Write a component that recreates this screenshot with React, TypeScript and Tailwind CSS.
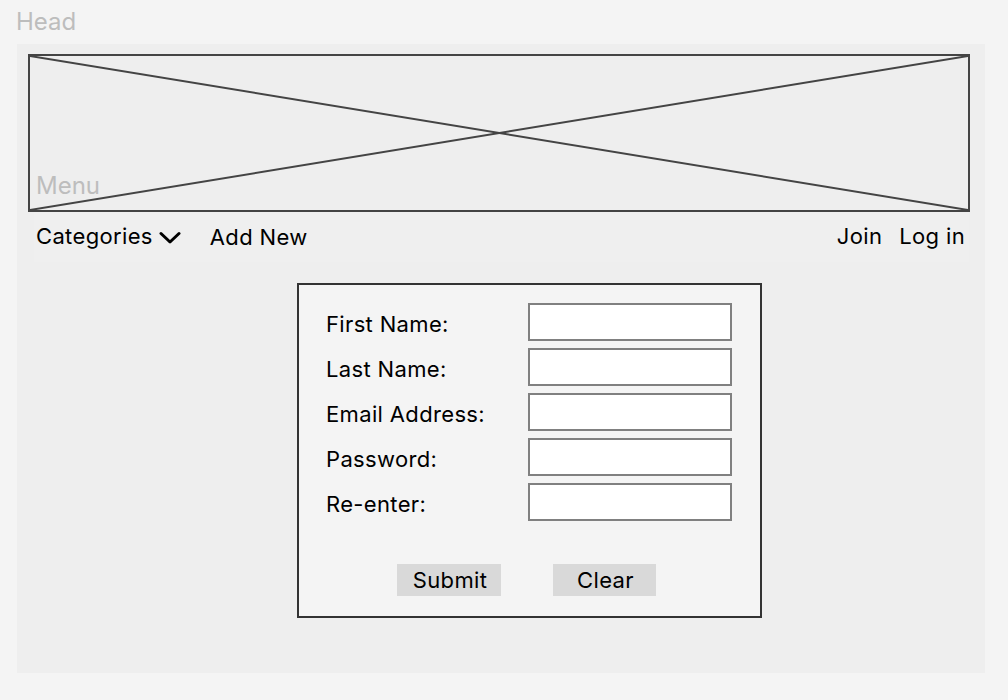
import { useState } from 'react';

const fields = ['First Name:', 'Last Name:', 'Email Address:', 'Password:', 'Re-enter:'];

const Chevron = () => (
  <svg width="22" height="14" viewBox="0 0 22 14" fill="none">
    <path d="M2 2.5 L11 11 L20 2.5" stroke="#000" strokeWidth="3" strokeLinecap="round" strokeLinejoin="round" />
  </svg>
);

const App = () => {
  const [values, setValues] = useState<string[]>(fields.map(() => ''));

  const update = (i: number, v: string) => {
    const next = [...values];
    next[i] = v;
    setValues(next);
  };

  return (
    <div className="w-full h-[700px] bg-[#f4f4f4] font-['Inter',sans-serif] text-black overflow-hidden">
      <div className="h-[44px] pl-[16px] pt-[6px] text-[24px] leading-[32px] text-[#bdbdbd]">Head</div>

      <div className="ml-[17px] w-[968px] h-[629px] bg-[#eeeeee] px-[11px] pt-[10px]">
        {/* banner placeholder */}
        <div className="relative h-[158px] w-[942px] border-2 border-[#444444]">
          <svg className="absolute inset-0 w-full h-full" viewBox="0 0 938 154" preserveAspectRatio="none">
            <line x1="0" y1="0" x2="938" y2="154" stroke="#444444" strokeWidth="2" />
            <line x1="0" y1="154" x2="938" y2="0" stroke="#444444" strokeWidth="2" />
          </svg>
          <span className="absolute left-[6px] top-[114px] text-[24px] leading-[32px] text-[#bdbdbd]">Menu</span>
        </div>

        {/* nav */}
        <div className="h-[50px] ml-[6px] mr-[5px] bg-[#efefef] flex items-center justify-between text-[22px] tracking-[0.35px] pb-[1px]">
          <div className="flex items-center">
            <span className="ml-[2px]">Categories</span>
            <span className="ml-[6px] mt-[2px]"><Chevron /></span>
            <span className="ml-[29px] mt-[2px]">Add New</span>
          </div>
          <div className="flex items-center gap-[17px] pr-[4px]">
            <span>Join</span>
            <span>Log in</span>
          </div>
        </div>

        {/* form */}
        <div className="ml-[269px] mt-[21px] w-[465px] h-[335px] border-2 border-[#333333] bg-[#f4f4f4] pt-[18px] pl-[27px]">
          <div className="flex flex-col gap-[7px]">
            {fields.map((label, i) => (
              <div key={label} className="flex items-center h-[38px]">
                <label className="w-[202px] text-[22px] tracking-[0.35px] leading-[28px] pt-[4px]">{label}</label>
                <input
                  type={i >= 3 ? 'password' : 'text'}
                  value={values[i]}
                  onChange={(e) => update(i, e.target.value)}
                  className="w-[204px] h-[38px] bg-white border-2 border-[#808080] outline-none px-2"
                />
              </div>
            ))}
          </div>
          <div className="flex mt-[43px] ml-[71px] gap-[52px]">
            <button
              onClick={() => setValues(values)}
              className="w-[104px] h-[32px] bg-[#d9d9d9] text-[22px] tracking-[0.35px] leading-[32px] pl-[2px]"
            >
              Submit
            </button>
            <button
              onClick={() => setValues(fields.map(() => ''))}
              className="w-[103px] h-[32px] bg-[#d9d9d9] text-[22px] tracking-[0.35px] leading-[32px] pl-[2px]"
            >
              Clear
            </button>
          </div>
        </div>
      </div>
    </div>
  );
};

export default App;
